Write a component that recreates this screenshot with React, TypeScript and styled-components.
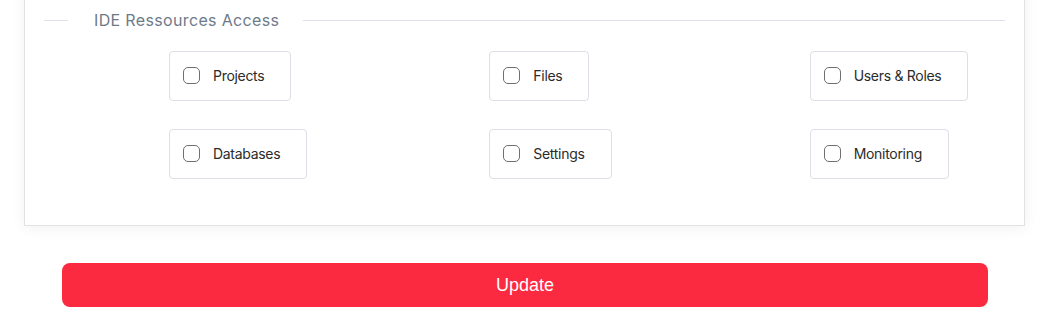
import React from "react";
import styled, { createGlobalStyle } from "styled-components";

const Global = createGlobalStyle`
  html, body { margin: 0; padding: 0; background: #ffffff; }
  body { font-family: "Inter", "Noto Sans", sans-serif; overflow: hidden; }
`;

const Page = styled.div`
  width: 1048px;
  height: 322px;
  overflow: hidden;
`;

const Card = styled.section`
  margin: -41px 23px 0 24px;
  padding: 50px 19px 46px;
  background: #fff;
  border: 1px solid #e2e2e2;
  box-shadow: 0 2px 14px rgba(0, 0, 0, 0.06);
`;

const Legend = styled.div`
  display: flex;
  align-items: center;
  height: 20px;
`;

const Line = styled.span<{ $grow?: boolean }>`
  height: 1px;
  background: #dfe1e8;
  width: ${(p) => (p.$grow ? "auto" : "24px")};
  flex: ${(p) => (p.$grow ? "1" : "none")};
`;

const LegendText = styled.span`
  font-size: 16px;
  color: #6e7a89;
  letter-spacing: 0.35px;
  margin: 0 24px 0 26px;
`;

const Grid = styled.div`
  display: grid;
  grid-template-columns: repeat(3, 1fr);
  row-gap: 28px;
  margin-top: 21px;
`;

const Cell = styled.div`
  padding-left: 125px;
  display: flex;
`;

const Option = styled.label`
  display: inline-flex;
  align-items: center;
  gap: 13px;
  height: 50px;
  box-sizing: border-box;
  padding: 0 26px 2px 13px;
  border: 1px solid #dcdfe6;
  border-radius: 4px;
  font-size: 14px;
  letter-spacing: -0.3px;
  color: #2b2b2b;
  cursor: pointer;
`;

const Box = styled.span`
  width: 17px;
  height: 17px;
  box-sizing: border-box;
  border: 1px solid #6f6f6f;
  border-radius: 5px;
  background: #fff;
  flex: none;
`;

const Footer = styled.div`
  padding: 37px 0 0 62px;
`;

const UpdateButton = styled.button`
  width: 926px;
  height: 44px;
  border: none;
  border-radius: 8px;
  background: #fb2a40;
  color: #fff;
  font-family: "Liberation Sans", Arial, sans-serif;
  font-size: 18px;
  cursor: pointer;
`;

const options = [
  "Projects",
  "Files",
  "Users & Roles",
  "Databases",
  "Settings",
  "Monitoring",
];

export default function App() {
  return (
    <Page>
      <Global />
      <Card>
        <Legend>
          <Line />
          <LegendText>IDE Ressources Access</LegendText>
          <Line $grow />
        </Legend>
        <Grid>
          {options.map((o) => (
            <Cell key={o}>
              <Option>
                <Box />
                {o}
              </Option>
            </Cell>
          ))}
        </Grid>
      </Card>
      <Footer>
        <UpdateButton>Update</UpdateButton>
      </Footer>
    </Page>
  );
}
